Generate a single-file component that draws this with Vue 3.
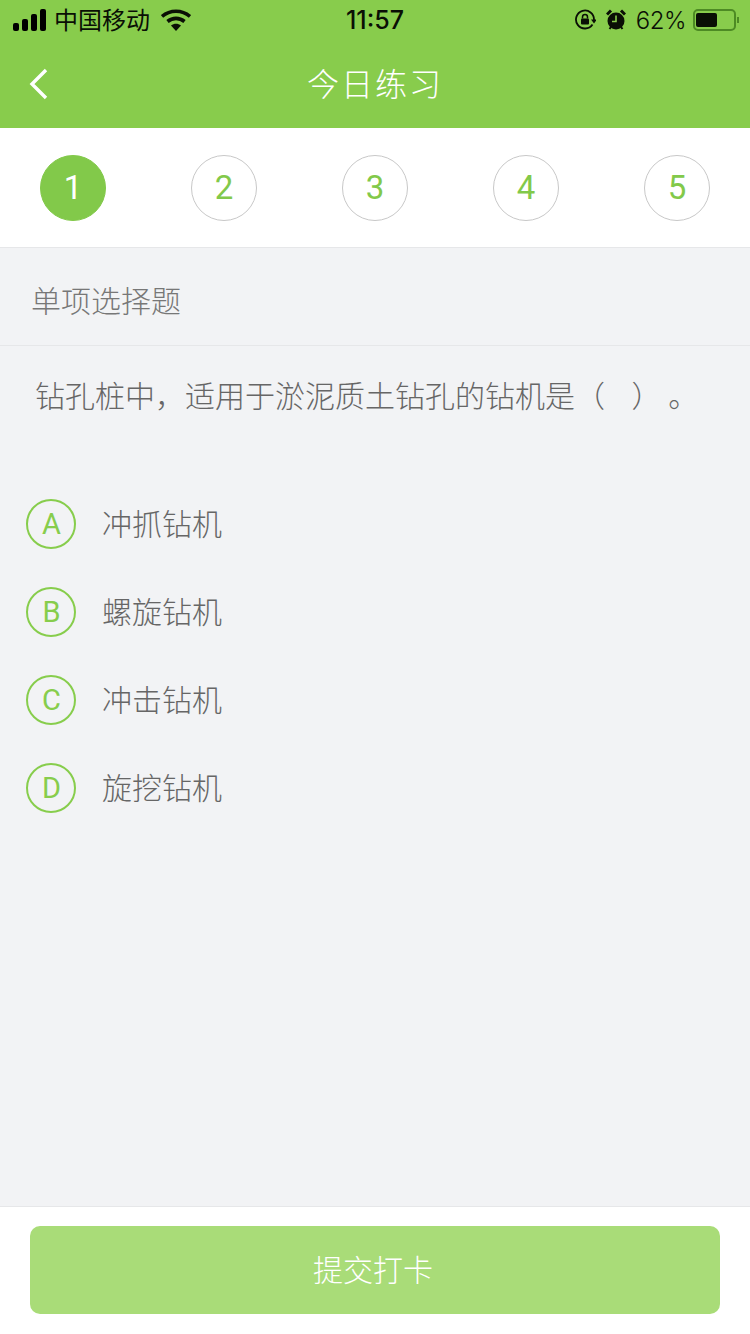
<script setup>
import { ref } from 'vue'

const steps = [1, 2, 3, 4, 5]
const activeStep = ref(1)

const options = [
  { key: 'A', text: '冲抓钻机' },
  { key: 'B', text: '螺旋钻机' },
  { key: 'C', text: '冲击钻机' },
  { key: 'D', text: '旋挖钻机' }
]
</script>

<template>
  <div class="page">
    <header class="top">
      <div class="status">
        <div class="status-left">
          <svg class="signal" width="34" height="22" viewBox="0 0 34 22">
            <rect x="0" y="14" width="6" height="8" rx="2" />
            <rect x="9" y="10" width="6" height="12" rx="2" />
            <rect x="18" y="5" width="6" height="17" rx="2" />
            <rect x="27" y="0" width="6" height="22" rx="2" />
          </svg>
          <span class="carrier">中国移动</span>
          <svg class="wifi" width="30" height="22" viewBox="0 0 30 22">
            <path d="M1 7.500C9 .5 21 .5 29 7.500" fill="none" stroke="#0a0f05" stroke-width="3.600" />
            <path d="M6.500 12.500C11.500 8.300 18.500 8.300 23.500 12.500" fill="none" stroke="#0a0f05" stroke-width="3.600" />
            <path d="M10 16.500C13 14 17 14 20 16.500L15 22Z" fill="#0a0f05" />
          </svg>
        </div>
        <span class="time">11:57</span>
        <div class="status-right">
          <svg width="22" height="22" viewBox="0 0 22 22">
            <path d="M18.500 15.500A9 9 0 1 1 20 11" fill="none" stroke="#0a0f05" stroke-width="1.800" />
            <path d="M17 10.500h6l-3 4Z" fill="#0a0f05" />
            <rect x="7" y="9.500" width="8" height="6" rx="1" fill="#0a0f05" />
            <path d="M8.500 9.500V8a2.500 2.500 0 0 1 5 0v1.500" fill="none" stroke="#0a0f05" stroke-width="1.500" />
          </svg>
          <svg class="alarm" width="20" height="22" viewBox="0 0 20 22">
            <circle cx="10" cy="12" r="8.500" fill="#0a0f05" />
            <path d="M1 5.500 5 1.500M19 5.500 15 1.500" stroke="#0a0f05" stroke-width="3" />
            <path d="M3.500 20 5 18M16.500 20 15 18" stroke="#0a0f05" stroke-width="2" />
            <path d="M10 6.500V12.500H6" fill="none" stroke="#88cc4c" stroke-width="1.600" />
          </svg>
          <span class="percent">62%</span>
          <div class="battery">
            <div class="battery-fill"></div>
          </div>
          <span class="battery-tip"></span>
        </div>
      </div>
      <div class="nav">
        <svg class="back" width="20" height="32" viewBox="0 0 20 32">
          <path d="M17 2 3 16l14 14" fill="none" stroke="#fff" stroke-width="3.400" />
        </svg>
        <h1 class="title">今日练习</h1>
      </div>
    </header>

    <div class="steps">
      <div
        v-for="n in steps"
        :key="n"
        class="step"
        :class="{ active: n === activeStep }"
      >{{ n }}</div>
    </div>

    <main class="content">
      <div class="type">单项选择题</div>
      <p class="question">钻孔桩中，适用于淤泥质土钻孔的钻机是（&nbsp;&nbsp;&nbsp;&nbsp;）&nbsp;。</p>
      <ul class="options">
        <li v-for="opt in options" :key="opt.key" class="option">
          <span class="letter">{{ opt.key }}</span>
          <span class="option-text">{{ opt.text }}</span>
        </li>
      </ul>
    </main>

    <footer class="footer">
      <button class="submit">提交打卡</button>
    </footer>
  </div>
</template>

<style scoped>
.page {
  width: 750px;
  height: 1334px;
  display: flex;
  flex-direction: column;
  background: #f2f3f5;
  font-family: "Noto Sans CJK SC", "Noto Sans", sans-serif;
  font-weight: 300;
}

.top {
  background: #88cc4c;
  height: 128px;
}

.status {
  height: 40px;
  display: flex;
  align-items: center;
  justify-content: space-between;
  position: relative;
  padding: 0 11px 0 13px;
  color: #0a0f05;
}

.status-left,
.status-right {
  display: flex;
  align-items: center;
}

.carrier {
  font-size: 24px;
  margin-left: 7px;
  margin-top: -3px;
  font-weight: 400;
}

.wifi {
  margin-left: 11px;
}

.time {
  position: absolute;
  left: 0;
  right: 0;
  text-align: center;
  font-family: "Inter", sans-serif;
  font-size: 25px;
  font-weight: 500;
}

.alarm {
  margin-left: 10px;
}

.percent {
  font-family: "Inter", sans-serif;
  font-size: 24px;
  font-weight: 300;
  letter-spacing: -0.5px;
  margin-left: 10px;
}

.battery {
  width: 43px;
  height: 22px;
  border: 2px solid #4d8a24;
  border-radius: 5px;
  box-sizing: border-box;
  margin-left: 7px;
  padding: 2px 1px;
}

.battery-fill {
  width: 21px;
  height: 100%;
  background: #0a0f05;
  border-radius: 2px;
}

.battery-tip {
  width: 2px;
  height: 6px;
  background: #4d8a24;
  margin-left: 1px;
}

.nav {
  height: 88px;
  display: flex;
  align-items: center;
  justify-content: center;
  position: relative;
  box-sizing: border-box;
  padding-bottom: 4px;
}

.back {
  position: absolute;
  left: 29px;
  top: 28px;
}

.title {
  margin: 0;
  color: #fff;
  font-size: 32px;
  font-weight: 300;
  letter-spacing: 2px;
}

.steps {
  height: 120px;
  box-sizing: border-box;
  background: #fff;
  border-bottom: 1px solid #e6e7e9;
  display: flex;
  align-items: center;
  justify-content: space-between;
  padding: 0 40px 0;
  flex: none;
}

.step {
  width: 66px;
  height: 66px;
  box-sizing: border-box;
  border: 1px solid #c8c8c8;
  border-radius: 50%;
  display: flex;
  align-items: center;
  justify-content: center;
  color: #82c94a;
  font-family: Roboto, sans-serif;
  font-size: 33px;
  font-weight: 400;
}

.step.active {
  background: #82c94a;
  border-color: #82c94a;
  color: #fff;
}

.content {
  flex: 1;
}

.type {
  height: 98px;
  line-height: 102px;
  box-sizing: border-box;
  border-bottom: 1px solid #e6e7e9;
  padding-left: 31px;
  font-size: 30px;
  color: #777;
}

.question {
  margin: 0;
  padding: 28px 35px 0;
  font-size: 30px;
  line-height: 40px;
  color: #666;
}

.options {
  list-style: none;
  margin: 0;
  padding: 66px 0 0 26px;
}

.option {
  height: 88px;
  display: flex;
  align-items: center;
  font-size: 30px;
  color: #666;
}

.option-text {
  margin-top: -4px;
}

.letter {
  width: 50px;
  height: 50px;
  box-sizing: border-box;
  border: 2px solid #87cd4c;
  border-radius: 50%;
  display: flex;
  align-items: center;
  justify-content: center;
  margin-right: 26px;
  padding-left: 1px;
  color: #87cd4c;
  font-family: Roboto, sans-serif;
  font-size: 29px;
  font-weight: 400;
}

.footer {
  height: 128px;
  flex: none;
  box-sizing: border-box;
  background: #fff;
  border-top: 1px solid #e6e7e9;
  padding: 19px 30px 0;
}

.submit {
  display: block;
  width: 100%;
  height: 88px;
  border: none;
  border-radius: 10px;
  background: #a9dc78;
  color: #fff;
  font-family: inherit;
  font-size: 30px;
  font-weight: 300;
  padding: 0 4px 4px 0;
}
</style>
